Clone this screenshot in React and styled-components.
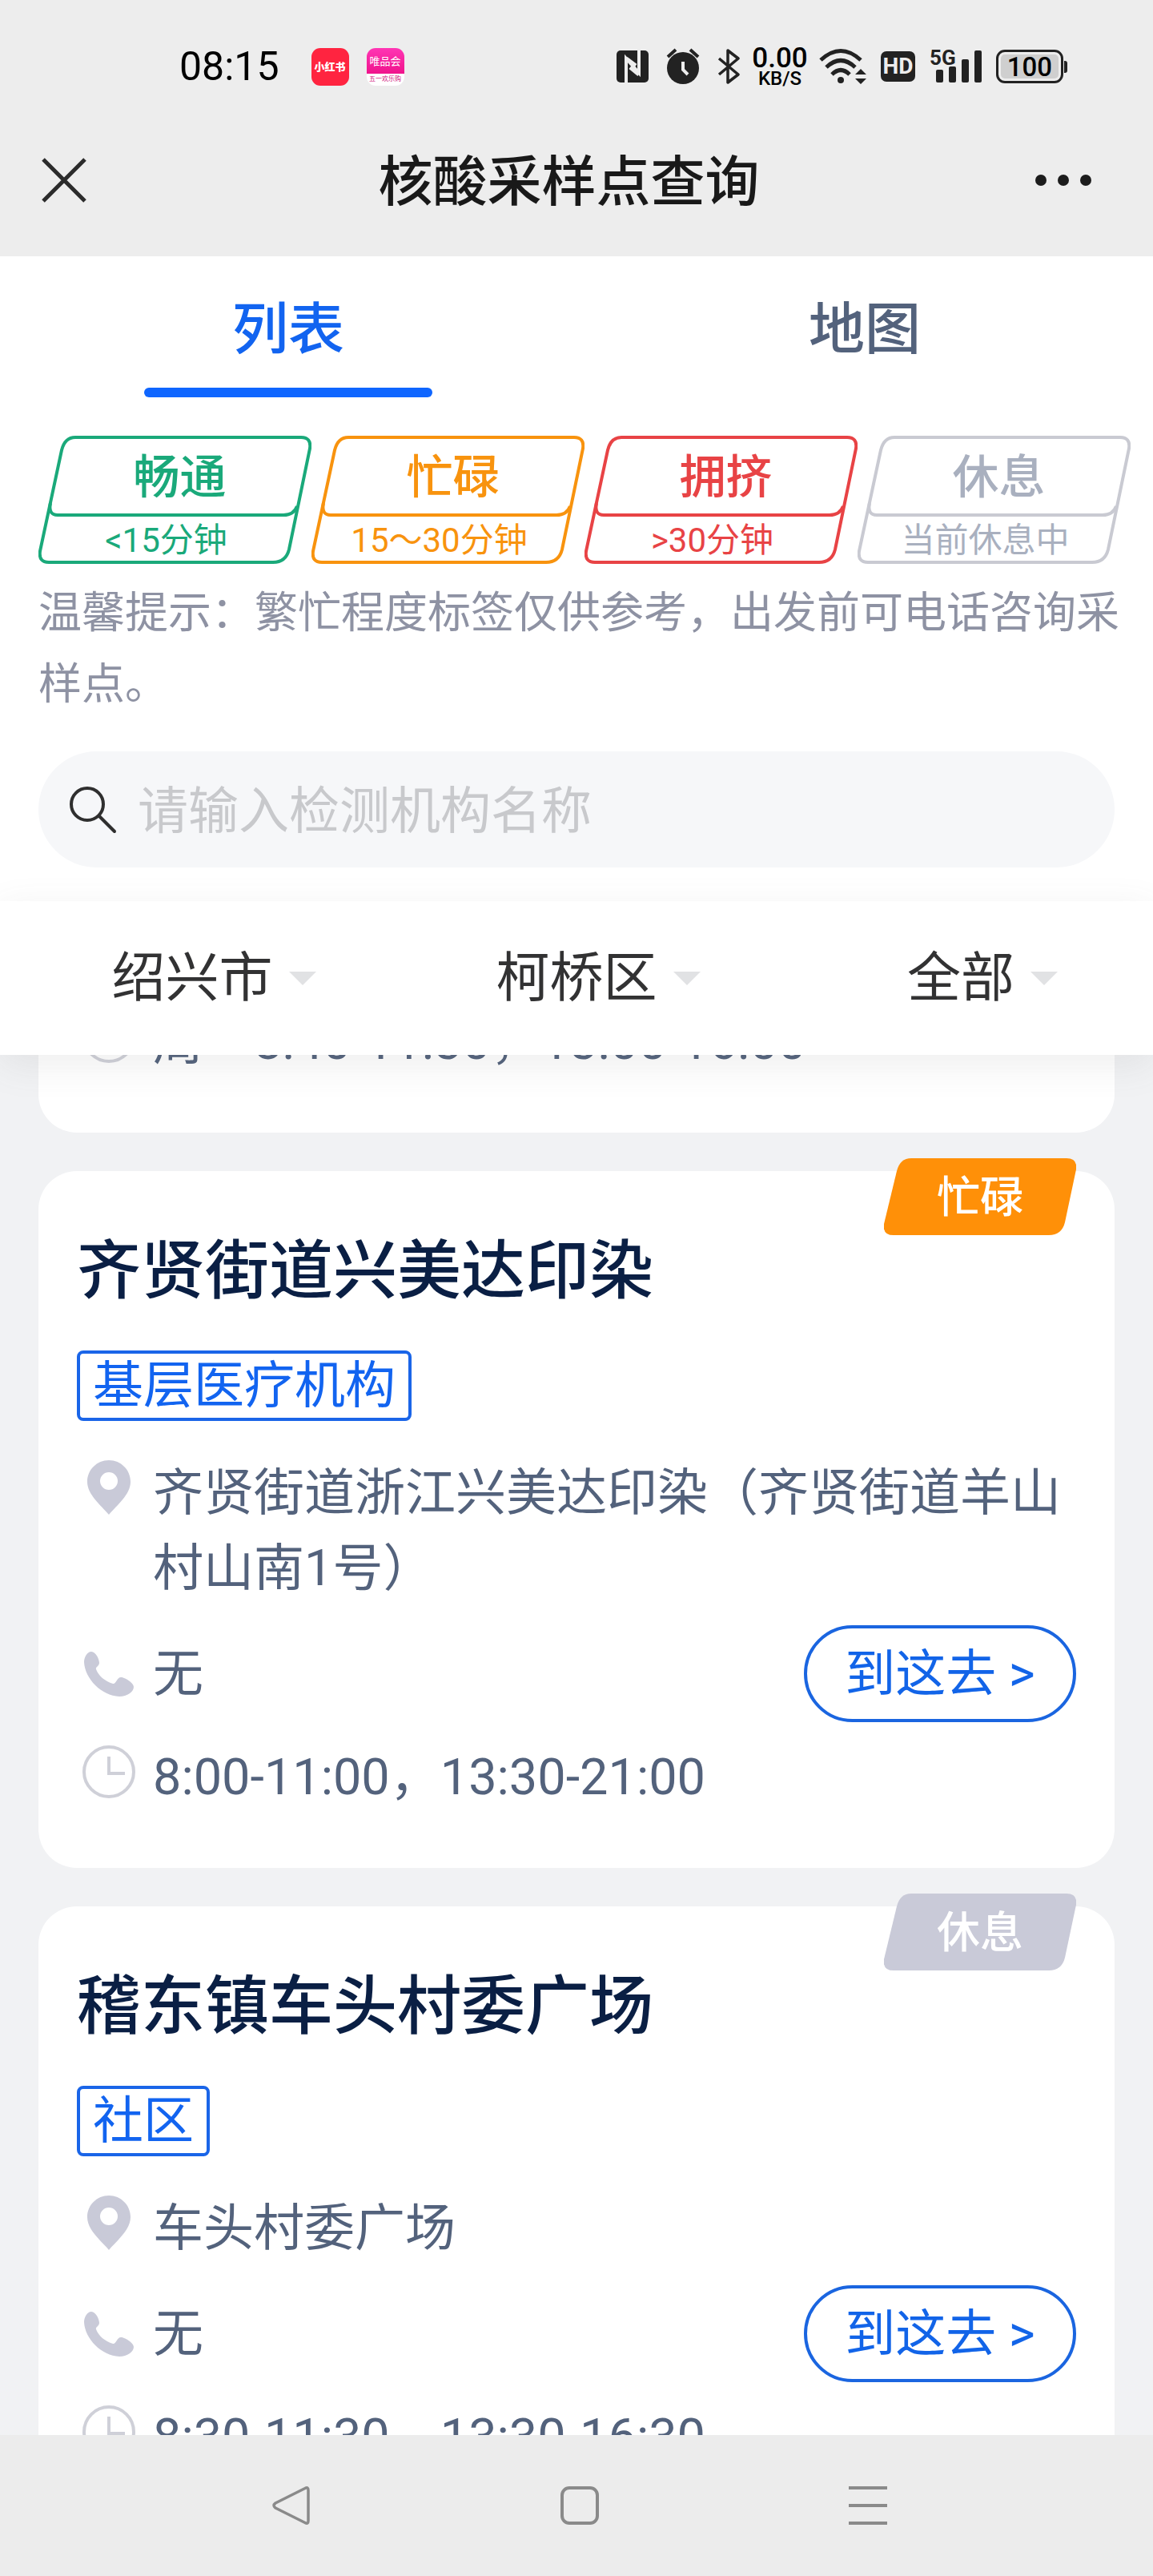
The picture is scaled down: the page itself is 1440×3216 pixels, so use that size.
import React, { useLayoutEffect, useRef, useState } from "react";
import styled, { createGlobalStyle } from "styled-components";

const levels = [
  { name: "畅通", note: "<15分钟", color: "#1aa97a" },
  { name: "忙碌", note: "15～30分钟", color: "#f8930e" },
  { name: "拥挤", note: ">30分钟", color: "#e84345" },
  { name: "休息", note: "当前休息中", color: "#a9b0bf", line: "#c9cad2" },
];

const filters = [
  { id: "city", label: "城市", value: "绍兴市" },
  { id: "district", label: "区县", value: "柯桥区" },
  { id: "kind", label: "类型", value: "全部" },
];

const sites = [
  { id: 1, hours: "周一8:40-11:30，13:00-16:00" },
  {
    id: 2,
    name: "齐贤街道兴美达印染",
    tag: "基层医疗机构",
    address: "齐贤街道浙江兴美达印染（齐贤街道羊山村山南1号）",
    phone: "无",
    hours: "8:00-11:00，13:30-21:00",
    status: "忙碌",
    statusColor: "#ff9008",
  },
  {
    id: 3,
    name: "稽东镇车头村委广场",
    tag: "社区",
    address: "车头村委广场",
    phone: "无",
    hours: "8:30-11:30，13:30-16:30",
    status: "休息",
    statusColor: "#c9cad8",
  },
];

const App = () => {
  const [tab, setTab] = useState("列表");
  const listRef = useRef(null);

  useLayoutEffect(() => {
    listRef.current.scrollTop = 133;
  }, []);

  return (
    <Screen>
      <GlobalStyle />
      <TopBar>
        <StatusBar />
        <TitleBar>
          <CloseButton aria-label="关闭">
            <svg width="56" height="56" viewBox="0 0 56 56">
              <path d="M2 2 54 54M54 2 2 54" stroke="#2b2b2b" strokeWidth="5" />
            </svg>
          </CloseButton>
          <Title>核酸采样点查询</Title>
          <PlainButton aria-label="更多">
            <svg width="70" height="14" viewBox="0 0 70 14" fill="#1c1c1c">
              <circle cx="7" cy="7" r="7" />
              <circle cx="35" cy="7" r="7" />
              <circle cx="63" cy="7" r="7" />
            </svg>
          </PlainButton>
        </TitleBar>
      </TopBar>

      <Panel>
        <Tabs role="tablist">
          {["列表", "地图"].map(name => (
            <Tab
              key={name}
              role="tab"
              aria-selected={tab === name}
              $active={tab === name}
              onClick={() => setTab(name)}
            >
              {name}
            </Tab>
          ))}
        </Tabs>
        <Legend>
          {levels.map(level => (
            <Level key={level.name} {...level} />
          ))}
        </Legend>
        <Tip>温馨提示：繁忙程度标签仅供参考，出发前可电话咨询采样点。</Tip>
        <Search>
          <svg width="60" height="60" viewBox="0 0 60 60" fill="none" stroke="#2f2f2f">
            <circle cx="23" cy="23" r="20" strokeWidth="4" />
            <path d="M38 38 57 57" strokeWidth="4" strokeLinecap="round" />
          </svg>
          <SearchInput aria-label="检测机构名称" placeholder="请输入检测机构名称" />
        </Search>
      </Panel>

      <FilterBar>
        {filters.map(f => (
          <Filter key={f.id}>
            <FilterSelect id={f.id} aria-label={f.label} defaultValue={f.value}>
              <option>{f.value}</option>
            </FilterSelect>
            <svg width="34" height="17" viewBox="0 0 34 17">
              <path d="M0 0H34L17 17Z" fill="#e1e2e4" />
            </svg>
          </Filter>
        ))}
      </FilterBar>

      <List ref={listRef}>
        {sites.map(site => (
          <SiteCard key={site.id} {...site} />
        ))}
      </List>

      <NavBar>
        <PlainButton aria-label="返回">
          <svg width="48" height="50" viewBox="0 0 48 50" fill="none" stroke="#8a8a8a" strokeWidth="3.5">
            <path d="M41 3.500Q45 1 45 6V44Q45 49 41 46.500L4 28Q0 25 4 22Z" strokeLinejoin="round" />
          </svg>
        </PlainButton>
        <PlainButton aria-label="主页">
          <svg width="48" height="48" viewBox="0 0 48 48" fill="none" stroke="#8a8a8a" strokeWidth="4">
            <rect x="2" y="2" width="44" height="44" rx="9" />
          </svg>
        </PlainButton>
        <PlainButton aria-label="最近任务">
          <svg width="48" height="48" viewBox="0 0 48 48" stroke="#8a8a8a" strokeWidth="4">
            <path d="M0 2H48M0 24H48M0 46H48" />
          </svg>
        </PlainButton>
      </NavBar>
    </Screen>
  );
};

const StatusBar = () => (
  <Status>
    <StatusGroup $gap={40}>
      <Clock>08:15</Clock>
      <StatusGroup $gap={22}>
        <RedApp>小红书</RedApp>
        <PinkApp>
          <span>唯品会</span>
          <small>五一欢乐购</small>
        </PinkApp>
      </StatusGroup>
    </StatusGroup>
    <StatusGroup $gap={14}>
      <StatusGroup $gap={22}>
        <svg width="40" height="42" viewBox="0 0 40 42">
          <rect y="1" width="40" height="40" rx="5" fill="#222" />
          <path d="M12 41V11L28 29V1" fill="none" stroke="#ededed" strokeWidth="4" />
          <path d="M12 11 24 20M28 31 17 22" stroke="#ededed" strokeWidth="5" />
        </svg>
        <svg width="42" height="46" viewBox="0 0 42 46">
          <circle cx="21" cy="25" r="20" fill="#222" />
          <path d="M2 11 12 2M40 11 30 2" stroke="#222" strokeWidth="4" />
          <path d="M21 17V27L27 33" fill="none" stroke="#ededed" strokeWidth="4" />
        </svg>
        <svg width="29" height="44" viewBox="0 0 29 44">
          <path
            d="M2 12 26 32 13 42V2L26 12 2 32"
            fill="none"
            stroke="#222"
            strokeWidth="3.500"
            strokeLinejoin="round"
          />
        </svg>
      </StatusGroup>
      <Speed>
        <b>0.00</b>
        <span>KB/S</span>
      </Speed>
      <StatusGroup $gap={18}>
        <svg width="59" height="46" viewBox="0 0 59 46" fill="none" stroke="#222" strokeWidth="5">
          <path d="M2 15Q27-8 52 15" />
          <path d="M9 24Q27 7 45 24" />
          <path d="M16 33Q27 22 38 33" />
          <circle cx="27" cy="40" r="4" fill="#222" stroke="none" />
          <path d="M45 33 52 26 59 33ZM45 38H59L52 45Z" fill="#222" stroke="none" />
        </svg>
        <HdBadge>HD</HdBadge>
        <Signal>
          <span>5G</span>
          <svg width="58" height="42" viewBox="0 0 58 42" fill="#222">
            <rect x="1" y="25" width="9" height="16" rx="2" />
            <rect x="17" y="21" width="9" height="20" rx="2" />
            <rect x="33" y="12" width="9" height="29" rx="2" />
            <rect x="49" y="1" width="9" height="40" rx="2" />
          </svg>
        </Signal>
        <Battery>
          <BatteryCell>100</BatteryCell>
        </Battery>
      </StatusGroup>
    </StatusGroup>
  </Status>
);

const Level = ({ name, note, color, line }) => (
  <LevelBox $color={color}>
    <svg width="341" height="160" viewBox="0 0 341 160" fill="none" stroke={line || color} strokeWidth="4">
      <path d="M46 2H328Q341 2 339 16L313 142Q309 158 293 158H13Q0 158 2 144L29 18Q33 2 46 2Z" />
      <path d="M15 84Q12 99 24 99H306Q319 99 323 88" />
    </svg>
    <strong>{name}</strong>
    <span>{note}</span>
  </LevelBox>
);

const SiteCard = ({ name, tag, address, phone, hours, status, statusColor }) => (
  <Card>
    {status && (
      <StatusFlag>
        <svg width="240" height="96" viewBox="0 0 240 96" fill={statusColor}>
          <path d="M34 0H228Q242 0 240 14L226 80Q222 96 206 96H12Q-2 96 0 82L16 16Q20 0 34 0Z" />
        </svg>
        <span>{status}</span>
      </StatusFlag>
    )}
    {name && <SiteName>{name}</SiteName>}
    {tag && <Tag>{tag}</Tag>}
    {address && (
      <Row>
        <IconSlot>
          <svg width="54" height="68" viewBox="0 0 54 68">
            <path
              d="M27 0C12 0 0 12 0 27C0 43 17 56 27 68C37 56 54 43 54 27C54 12 42 0 27 0ZM27 15A11 11 0 1 1 27 37A11 11 0 1 1 27 15Z"
              fill="#c9cad8"
              fillRule="evenodd"
            />
          </svg>
        </IconSlot>
        <RowText>{address}</RowText>
      </Row>
    )}
    {phone && (
      <PhoneRow>
        <IconSlot>
          <svg width="62" height="56" viewBox="0 0 62 56">
            <path
              d="M9 0C15 0 19 10 19 14C19 18 14 19 15 22C18 30 26 37 36 40C40 41 41 32 46 32C51 32 62 39 62 44C62 50 54 56 44 56C22 55 1 34 0 13C0 7 4 0 9 0Z"
              fill="#c9cad8"
            />
          </svg>
        </IconSlot>
        <RowText>{phone}</RowText>
        <GoButton>到这去 &gt;</GoButton>
      </PhoneRow>
    )}
    <Row>
      <IconSlot>
        <svg width="66" height="66" viewBox="0 0 66 66" fill="none" stroke="#cfd0d8">
          <circle cx="33" cy="33" r="31" strokeWidth="4" />
          <path d="M33 14V35H53" strokeWidth="4" />
        </svg>
      </IconSlot>
      <RowText>{hours}</RowText>
    </Row>
  </Card>
);

const GlobalStyle = createGlobalStyle`
  * {
    box-sizing: border-box;
  }

  body {
    margin: 0;
    font-family: Roboto, "Noto Sans CJK SC", sans-serif;
    background: #f1f2f4;
  }

  button, input, select {
    font-family: inherit;
  }

  svg {
    display: block;
    flex-shrink: 0;
  }
`;

const Screen = styled.div`
  display: flex;
  flex-direction: column;
  height: 100vh;
`;

const TopBar = styled.header`
  background: #ededed;
  padding-bottom: 36px;
`;

const Status = styled.div`
  display: flex;
  justify-content: space-between;
  align-items: center;
  height: 166px;
  padding: 0 107px 0 224px;
  color: #000;
`;

const StatusGroup = styled.div`
  display: flex;
  align-items: center;
  gap: ${props => props.$gap}px;
`;

const Clock = styled.time`
  font-size: 50px;
  line-height: 60px;
`;

const AppIcon = styled.div`
  display: flex;
  flex-direction: column;
  align-items: center;
  width: 47px;
  height: 47px;
  border-radius: 11px;
  overflow: hidden;
  color: #fff;
  font-size: 13px;
  line-height: 47px;
  white-space: nowrap;
`;

const RedApp = styled(AppIcon)`
  background: #ff2440;
  font-weight: 900;
`;

const PinkApp = styled(AppIcon)`
  background: linear-gradient(#ff35b4, #f0148c 68%, #fff 68%);
  line-height: 34px;

  small {
    color: #d0107c;
    font-size: 8px;
    line-height: 10px;
  }
`;

const Speed = styled.div`
  display: flex;
  flex-direction: column;
  align-items: center;
  width: 70px;
  font-size: 24px;
  font-weight: 500;
  line-height: 20px;

  b {
    font-size: 35px;
    font-weight: 500;
    line-height: 30px;
  }
`;

const HdBadge = styled.div`
  width: 43px;
  height: 38px;
  border-radius: 7px;
  background: #222;
  color: #ededed;
  font-size: 28px;
  font-weight: 700;
  line-height: 38px;
  text-align: center;
`;

const Signal = styled.div`
  position: relative;
  padding-left: 7px;

  span {
    position: absolute;
    top: -6px;
    left: 0;
    color: #222;
    font-size: 26px;
    font-weight: 700;
    line-height: 32px;
  }
`;

const Battery = styled.div`
  display: flex;
  align-items: center;
  gap: 1px;

  &::after {
    content: "";
    width: 4px;
    height: 15px;
    border-radius: 0 3px 3px 0;
    background: #222;
  }
`;

const BatteryCell = styled.div`
  width: 84px;
  height: 42px;
  border: 3px solid #222;
  border-radius: 11px;
  background: #cfcfcf;
  box-shadow: inset 0 0 0 3px #ededed;
  font-size: 33px;
  font-weight: 500;
  line-height: 37px;
  text-align: center;
`;

const TitleBar = styled.div`
  display: flex;
  align-items: center;
  justify-content: space-between;
  height: 118px;
  padding: 0 77px 0 52px;
`;

const PlainButton = styled.button`
  display: flex;
  padding: 0;
  border: none;
  background: none;
`;

const CloseButton = styled(PlainButton)`
  width: 76px;
`;

const Title = styled.h1`
  margin: 0;
  padding-top: 6px;
  color: #191919;
  font-size: 68px;
  font-weight: 500;
  line-height: 90px;
`;

const Panel = styled.section`
  padding-bottom: 42px;
  background: #fff;
`;

const Tabs = styled.div`
  display: grid;
  grid-template-columns: 1fr 1fr;
`;

const Tab = styled.button`
  display: flex;
  flex-direction: column;
  align-items: center;
  gap: 22px;
  padding: 42px 0 0;
  border: none;
  background: none;
  color: ${props => (props.$active ? "#1264f0" : "#53627c")};
  font-size: 70px;
  font-weight: 500;
  line-height: 100px;

  &::after {
    content: "";
    width: 50%;
    height: 12px;
    border-radius: 6px;
    background: ${props => (props.$active ? "#0f66ff" : "transparent")};
  }
`;

const Legend = styled.div`
  display: flex;
  padding: 48px 28px 0 48px;
`;

const LevelBox = styled.div`
  position: relative;
  display: flex;
  flex-direction: column;
  width: 341px;
  height: 160px;
  color: ${props => props.$color};
  text-align: center;

  svg {
    position: absolute;
    inset: 0;
  }

  strong {
    padding-left: 12px;
    font-size: 58px;
    font-weight: 500;
    line-height: 104px;
  }

  span {
    padding-right: 22px;
    font-size: 42px;
    line-height: 54px;
  }
`;

const Tip = styled.p`
  margin: 17px 40px 39px 48px;
  color: #8e92a3;
  font-size: 54px;
  line-height: 89px;
`;

const Search = styled.div`
  display: flex;
  align-items: center;
  gap: 26px;
  height: 145px;
  margin: 0 48px;
  padding: 0 38px;
  border-radius: 73px;
  background: #f6f7f9;
`;

const SearchInput = styled.input`
  flex: 1;
  min-width: 0;
  padding: 4px 0 0;
  border: none;
  outline: none;
  background: none;
  color: #323233;
  font-size: 63px;
  line-height: 90px;

  &::placeholder {
    color: #c8c9cc;
  }
`;

const FilterBar = styled.div`
  position: relative;
  z-index: 1;
  display: grid;
  grid-template-columns: repeat(3, 1fr);
  height: 192px;
  background: #fff;
  box-shadow: 0 12px 44px rgba(100, 101, 102, 0.11);
`;

const Filter = styled.div`
  display: flex;
  align-items: center;
  justify-content: center;
  gap: 20px;
  padding-left: 54px;
`;

const FilterSelect = styled.select`
  appearance: none;
  field-sizing: content;
  padding: 0;
  border: none;
  background: none;
  color: #323233;
  font-size: 67px;
  line-height: 90px;
`;

const List = styled.main`
  flex: 1;
  min-height: 0;
  display: flex;
  flex-direction: column;
  gap: 48px;
  padding: 0 48px 48px;
  overflow-y: auto;
  scrollbar-width: none;
`;

const Card = styled.article`
  position: relative;
  flex-shrink: 0;
  padding: 70px 48px 66px;
  border-radius: 48px;
  background: #fff;
`;

const StatusFlag = styled.div`
  position: absolute;
  top: -16px;
  right: 48px;
  width: 240px;
  color: #fff;
  font-size: 54px;
  font-weight: 500;
  line-height: 100px;
  text-align: center;

  svg {
    position: absolute;
    inset: 0;
  }

  span {
    position: relative;
  }
`;

const SiteName = styled.h2`
  margin: 0 0 44px;
  color: #0a1f44;
  font-size: 80px;
  font-weight: 500;
  line-height: 110px;
`;

const Tag = styled.span`
  display: block;
  width: fit-content;
  margin-bottom: 43px;
  padding: 0 16px;
  border: 4px solid #1a65e8;
  border-radius: 8px;
  color: #1264f0;
  font-size: 63px;
  line-height: 80px;
`;

const Row = styled.div`
  display: flex;
  align-items: flex-start;
  gap: 15px;
`;

const PhoneRow = styled(Row)`
  align-items: center;
  margin: 24px 0 22px;
`;

const IconSlot = styled.div`
  display: flex;
  align-items: center;
  justify-content: center;
  flex-shrink: 0;
  width: 80px;
  height: 80px;
`;

const RowText = styled.div`
  flex: 1;
  color: #53627c;
  font-size: 63px;
  line-height: 94px;
`;

const GoButton = styled.button`
  width: 340px;
  height: 121px;
  padding: 0;
  border: 4px solid #1a65e0;
  border-radius: 61px;
  background: none;
  color: #1264e8;
  font-size: 63px;
  line-height: 94px;
`;

const NavBar = styled.nav`
  display: grid;
  grid-template-columns: repeat(3, 1fr);
  place-items: center;
  height: 176px;
  padding: 0 176px 0 184px;
  background: #ececec;
`;

export default App;
